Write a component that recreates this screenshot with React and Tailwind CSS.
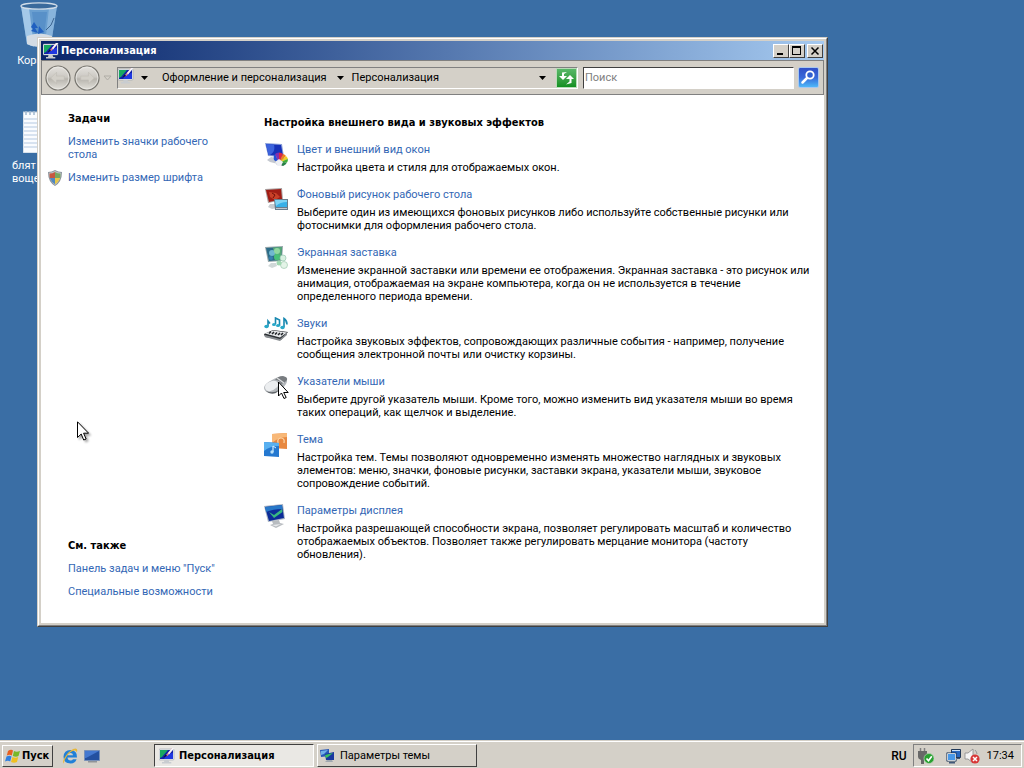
const SETTINGS = [
  {
    icon: ColorIcon,
    title: 'Цвет и внешний вид окон',
    lines: ['Настройка цвета и стиля для отображаемых окон.'],
  },
  {
    icon: WallpaperIcon,
    title: 'Фоновый рисунок рабочего стола',
    lines: [
      'Выберите один из имеющихся фоновых рисунков либо используйте собственные рисунки или',
      'фотоснимки для оформления рабочего стола.',
    ],
  },
  {
    icon: ScreensaverIcon,
    title: 'Экранная заставка',
    lines: [
      'Изменение экранной заставки или времени ее отображения. Экранная заставка - это рисунок или',
      'анимация, отображаемая на экране компьютера, когда он не используется в течение',
      'определенного периода времени.',
    ],
  },
  {
    icon: SoundsIcon,
    title: 'Звуки',
    lines: [
      'Настройка звуковых эффектов, сопровождающих различные события - например, получение',
      'сообщения электронной почты или очистку корзины.',
    ],
  },
  {
    icon: PointersIcon,
    title: 'Указатели мыши',
    lines: [
      'Выберите другой указатель мыши. Кроме того, можно изменить вид указателя мыши во время',
      'таких операций, как щелчок и выделение.',
    ],
  },
  {
    icon: ThemeIcon,
    title: 'Тема',
    lines: [
      'Настройка тем. Темы позволяют одновременно изменять множество наглядных и звуковых',
      'элементов: меню, значки, фоновые рисунки, заставки экрана, указатели мыши, звуковое',
      'сопровождение событий.',
    ],
  },
  {
    icon: DisplayIcon,
    title: 'Параметры дисплея',
    lines: [
      'Настройка разрешающей способности экрана, позволяет регулировать масштаб и количество',
      'отображаемых объектов. Позволяет также регулировать мерцание монитора (частоту',
      'обновления).',
    ],
  },
]

const raised =
  'border border-t-white border-l-white border-r-[#404040] border-b-[#404040] bg-[#d4d0c8]'
const sunken = 'border border-t-[#808080] border-l-[#808080] border-r-white border-b-white'
const link = 'text-[#3367b5] hover:underline'
const bold = "font-bold font-['DejaVu_Sans_Condensed','DejaVu_Sans',sans-serif]"

function PersonalizeIcon({ className = 'w-4 h-4' }) {
  return (
    <svg viewBox="0 0 16 16" className={className}>
      <rect x="0" y="1" width="15" height="11" rx="1" fill="#e8ecf0" stroke="#8a94a0" strokeWidth=".5" />
      <rect x="1" y="2" width="13" height="9" fill="#1020a8" />
      <path d="M1 2h8L3 9l-2 1z" fill="#18a860" />
      <path d="M8 6l6-1v6H5z" fill="#2038e0" />
      <path d="M4.500 9.500L7 6.500l1.500 1z" fill="#111" />
      <path d="M7 7L13 0l2 0-6.500 8z" fill="#d88090" />
      <path d="M9 5l4-5h2.500L10 6.500z" fill="#f4f4f8" />
      <path d="M5.500 12h4l.8 2h2v1.500H3V14h2z" fill="#c8ccd0" />
    </svg>
  )
}

function ColorIcon() {
  return (
    <svg viewBox="0 0 24 24" className="w-6 h-6">
      <path d="M1 0l17 1 2 13L4 13z" fill="#8a9fd8" />
      <path d="M2 1l15 1 2 11L4.500 12z" fill="#1632b8" />
      <path d="M2 1l8 .5c1 5 0 8-4 10.600L4.500 12z" fill="#3c63dc" />
      <path d="M7 14l5 1 2 6-8-2-3-2z" fill="#c4c8d0" />
      <path d="M10 16l5-4 8 4-4 7-6-1z" fill="#8890a0" />
      <path d="M15 20l-5-3q-1-4 1-6z" fill="#2050d8" />
      <path d="M15 20l-4-9q1.500-1.500 4-1.500z" fill="#8030b0" />
      <path d="M15 20V9.500q2.500 0 4 1.500z" fill="#d82848" />
      <path d="M15 20l4-9q2 .5 3 2z" fill="#f08020" />
      <path d="M15 20l7-7q1.500 1.500 2 3z" fill="#e8d028" />
      <path d="M15 20l9-4q0 2-1 3.500z" fill="#40b038" />
      <path d="M15 20l8-.5q-1 2-4 3.500z" fill="#288048" />
      <path d="M11 19l4-3 4 3-2 4h-3z" fill="#eef0f4" />
    </svg>
  )
}

function WallpaperIcon() {
  return (
    <svg viewBox="0 0 24 24" className="w-6 h-6">
      <path d="M1 1l17-1 1 12-15 3z" fill="#a8a0a0" />
      <path d="M2 2l15-1 1 10-13 3z" fill="#a01c14" />
      <path d="M5 4l7 1 4 4-5 3-5-3z" fill="#c84028" />
      <path d="M8 5l3 2-2 3" fill="none" stroke="#701008" />
      <path d="M6 16l5 0 2 4-5 1-4-2z" fill="#c8ccd0" />
      <path d="M10 11h14v11H11z" fill="#687c8c" />
      <path d="M11 12h12v7H12z" fill="#38b0e8" />
      <path d="M11 12h12v2q-7 0-11 4z" fill="#80d4f4" />
      <path d="M12 20h11v1H12z" fill="#c0c8d0" />
    </svg>
  )
}

function ScreensaverIcon() {
  return (
    <svg viewBox="0 0 24 24" className="w-6 h-6">
      <path d="M1 1l18-1-1 15-14 1z" fill="#98a8ac" />
      <path d="M2 2l16-1-1 13-12 1z" fill="#2c6c88" />
      <path d="M9 1.500l9-.5-1 13-6 .5z" fill="#58a878" />
      <circle cx="8" cy="7" r="3" fill="#70b8d0" />
      <circle cx="13" cy="5" r="3" fill="#90d8a0" />
      <circle cx="13" cy="11" r="3" fill="#48c078" />
      <circle cx="7" cy="12" r="2" fill="#3880b0" />
      <circle cx="19" cy="12" r="3" fill="#d8f0e0" stroke="#98c8b0" strokeWidth=".7" />
      <circle cx="20" cy="19" r="3.500" fill="#e4f4e8" stroke="#a0c8b0" strokeWidth=".7" />
      <circle cx="15" cy="17" r="2.500" fill="#a0d8b0" />
      <path d="M7 17l5 0 1 3-5 2-4-2z" fill="#d0d8d8" />
    </svg>
  )
}

function SoundsIcon() {
  return (
    <svg viewBox="0 0 24 24" className="w-6 h-6">
      <g fill="none" stroke="#1888b0" strokeWidth="1.600">
        <path d="M4 9.500V4l2 2.500" />
        <path d="M11.500 7V1l4 2v6" />
        <path d="M20 10V1.500q3 2 3 6" />
      </g>
      <g fill="#28a8c8">
        <ellipse cx="2.500" cy="9.500" rx="2.200" ry="1.700" />
        <ellipse cx="10" cy="7.500" rx="2" ry="1.600" />
        <ellipse cx="14" cy="8.500" rx="2" ry="1.600" />
        <ellipse cx="18.500" cy="10.500" rx="2.200" ry="1.700" />
      </g>
      <path d="M0 17l9-4 15 2-7 8L1 20z" fill="#2c3034" />
      <path d="M1 16.500l8-3 14 2-7 5z" fill="#e8eaec" />
      <path d="M7 14.500l-2 2M10 15l-2 2M13 15.500l-2 2M16 16l-2 2M19 16l-2 2" stroke="#202428" strokeWidth="1.600" />
      <path d="M1 18l15 4 7-6v2l-7 6-15-4z" fill="#888c90" />
    </svg>
  )
}

function Pointer({ className }) {
  return (
    <svg viewBox="0 0 12 20" className={className}>
      <path
        d="M.5 .8v15.700l3.700-3.500 2.500 6 2.400-1-2.500-5.800h5z"
        fill="#fff"
        stroke="#000"
        strokeWidth="1"
      />
    </svg>
  )
}

function PointersIcon() {
  return (
    <svg viewBox="0 0 24 24" className="w-6 h-6 overflow-visible">
      <path d="M0 13q0-4 8-8 8-5 12-3 5 2 2 7-4 7-13 9-8 1-9-5z" fill="#b4b8bc" />
      <path d="M1 12q0-4 7-6 4-1 6 2 1 3-2 5-4 4-8 3-3-1-3-4z" fill="#eceef0" />
      <path d="M11 5q3-4 8-4 5 1 4 4-2 3-6 4-1-4-6-4z" fill="#787c80" />
      <path d="M13 3l7 5" stroke="#d8dadc" strokeWidth="1.500" />
      <path d="M2 16q7 3 13-1l-3 3q-6 2-10-2z" fill="#606468" />
      <path d="M14.500 7v14l3-3 2.500 5.500 2.200-1-2.500-5h4.500z" fill="#fff" stroke="#000" />
    </svg>
  )
}

function ThemeIcon() {
  return (
    <svg viewBox="0 0 24 24" className="w-6 h-6">
      <path d="M8 1l15-1v16l-15-1z" fill="#e88840" />
      <path d="M8 1l15-1v4q-9 0-15 6z" fill="#f8b878" />
      <path d="M14 10q-1-5 3-5t3 5" fill="none" stroke="#fcd8a8" strokeWidth="1.200" />
      <path d="M0 9l15 1v14l-15-1z" fill="#2478d0" />
      <path d="M0 9l15 1v3Q6 13 0 18z" fill="#58b0f0" />
      <path d="M9 13v6" stroke="#d0ecff" strokeWidth="1.200" />
      <circle cx="8" cy="19" r="1.700" fill="#b8e0f8" />
      <path d="M9 13l3 2" stroke="#d0ecff" />
    </svg>
  )
}

function DisplayIcon() {
  return (
    <svg viewBox="0 0 24 24" className="w-6 h-6">
      <path d="M0 2l19-2 2 15-17 3z" fill="#a8b4c4" />
      <path d="M1 3l17-2 2 13-15 3z" fill="#0c2c98" />
      <path d="M1 3l17-2 .5 4Q9 5 2 8z" fill="#2878c8" />
      <path d="M5 8l5 3 8-6 .5 3L10 14z" fill="#38b880" />
      <path d="M8 17l7-1 1 3 4 1-8 4-6-3 3-1z" fill="#b8bcc0" />
      <path d="M8 21l9-1-5 2.500z" fill="#e8eaec" />
    </svg>
  )
}

function ShieldIcon() {
  return (
    <svg viewBox="0 0 14 16" className="w-3.5 h-4 shrink-0">
      <path d="M7 0q3 2 7 2 0 10-7 14Q0 12 0 2q4 0 7-2z" fill="#8c949c" />
      <path d="M7 1q2.500 1.500 6 1.800Q12.500 11 7 15 1.500 11 1 2.800 4.500 2.500 7 1z" fill="#c4c8cc" />
      <path d="M7 2V8H1.800Q1.500 6 1.500 3.500q3 0 5.500-1.500z" fill="#c85840" />
      <path d="M7 2V8h5.200Q12.500 6 12.500 3.500 9.500 3.500 7 2z" fill="#78a860" />
      <path d="M7 8v6.300Q3.500 12 1.800 8z" fill="#5088c0" />
      <path d="M7 8v6.300Q10.500 12 12.200 8z" fill="#e8c848" />
    </svg>
  )
}

function RecycleBin() {
  return (
    <svg viewBox="0 0 38 46" className="w-[38px] h-[46px]">
      <path d="M1 4l6 38q12 6 24 0l6-38z" fill="#6a9fd0" />
      <path d="M1 4l6 38q4 2 7 2.500L9 6z" fill="#a4c8e8" />
      <path d="M29 6l-4 37 6-1 6-38z" fill="#88b4dc" />
      <path d="M12 10l3 24h9l3-24z" fill="#5890c8" />
      <path d="M7 34q12-5 25 0l-1 8q-12 6-24 0z" fill="#d4dce4" />
      <path d="M14 20l4 6h-3l3 5-7-2 2-2-2-2zM19 24l5 6-6 2z" fill="#2060c0" />
      <ellipse cx="19" cy="4" rx="18" ry="3.200" fill="#3a6a9c" stroke="#d0dce8" strokeWidth="1.300" />
      <path d="M26 28q6-4 8-12" fill="none" stroke="#3c6490" />
    </svg>
  )
}

function NotepadFile() {
  return (
    <svg viewBox="0 0 32 42" className="w-8 h-[42px]">
      <path d="M0 1h32v41H0z" fill="#fafcff" stroke="#b8c8d8" />
      <path
        d="M1 8h30M1 12h30M1 16h30M1 20h30M1 24h30M1 28h30M1 32h30M1 36h30"
        stroke="#b4c8e0"
      />
      <path d="M3 0v4M7 0v4M11 0v4M15 0v4M19 0v4M23 0v4M27 0v4" stroke="#a0b8d0" strokeWidth="1.500" />
    </svg>
  )
}

function Caret({ className = '' }) {
  return (
    <svg viewBox="0 0 7 4" className={`w-[7px] h-1 shrink-0 ${className}`}>
      <path d="M0 0h7L3.500 4z" fill="currentColor" />
    </svg>
  )
}

function NavButton({ back }) {
  return (
    <button type="button" aria-label={back ? 'Назад' : 'Вперед'} className="w-[26px] h-[26px] rounded-full">
      <svg viewBox="0 0 27 27" className="w-[26px] h-[26px]">
        <defs>
          <linearGradient id="nav-face" x1="0" y1="0" x2="0" y2="1">
            <stop offset="0" stopColor="#e4e2de" />
            <stop offset=".46" stopColor="#ccc9c3" />
            <stop offset=".54" stopColor="#b8b5ae" />
            <stop offset="1" stopColor="#e4e2dc" />
          </linearGradient>
        </defs>
        <circle cx="13.500" cy="13.500" r="12.500" fill="url(#nav-face)" stroke="#77756f" strokeWidth="1.200" />
        <circle cx="13.500" cy="13.500" r="11.300" fill="none" stroke="#eceae6" strokeWidth=".8" />
        <path
          d={back ? 'M6 13.500l6-6v4h8v4h-8v4z' : 'M21 13.500l-6-6v4H7v4h8v4z'}
          fill="#d2cfc8"
          stroke="#c0bdb6"
          strokeWidth=".6"
        />
      </svg>
    </button>
  )
}

function TitleBar() {
  const btn = `${raised} w-4 h-3.5 flex items-center justify-center`
  return (
    <header className="h-[19px] flex items-center pl-0.5 pr-px bg-linear-to-r from-[#0a246a] to-[#a6caf0]">
      <PersonalizeIcon />
      <h1 className={`flex-1 pl-0.5 text-white ${bold}`}>Персонализация</h1>
      <button type="button" aria-label="Свернуть" className={btn}>
        <svg viewBox="0 0 12 10" className="w-3 h-2.5"><path d="M2 7h6v2H2z" /></svg>
      </button>
      <button type="button" aria-label="Развернуть" className={btn}>
        <svg viewBox="0 0 12 10" className="w-3 h-2.5"><path d="M1 0h9v9H1zM2 2v6h7V2z" fillRule="evenodd" /></svg>
      </button>
      <button type="button" aria-label="Закрыть" className={`${btn} ml-0.5`}>
        <svg viewBox="0 0 12 10" className="w-3 h-2.5">
          <path d="M2.500 1.500l7 7M9.500 1.500l-7 7" stroke="#000" strokeWidth="1.500" />
        </svg>
      </button>
    </header>
  )
}

function Toolbar() {
  return (
    <div className="h-[35px] flex items-center pl-[3px] pr-1 border border-[#808080]">
      <div className="flex items-center gap-[3px]">
        <NavButton back />
        <NavButton />
        <svg viewBox="0 0 9 6" className="w-[9px] h-1.5">
          <path d="M1 1h7L4.500 5z" fill="#d4d0c8" stroke="#b0ada6" />
        </svg>
      </div>
      <nav className={`${sunken} ml-[5px] flex-1 h-[22px] flex items-center`}>
        <PersonalizeIcon className="w-4 h-4 mb-1" />
        <Caret className="ml-[7px]" />
        <a href="#appearance" className="ml-3.5 whitespace-nowrap">Оформление и персонализация</a>
        <Caret className="ml-2.5" />
        <a href="#personalization" className="ml-2 whitespace-nowrap">Персонализация</a>
        <Caret className="ml-auto mr-2.5" />
        <button type="button" aria-label="Обновить" className="w-[21px] h-5 bg-linear-to-b from-[#58b868] to-[#109020] border border-[#b8dcb8]">
          <svg viewBox="0 0 19 18" className="w-[19px] h-[18px]">
            <path d="M2 7l4 4 4-4H7V5l3-2-5 .500V7z" fill="#fff" />
            <path d="M9 10l4-4 4 4h-2.500v4L9 15.500l3.500-3V10z" fill="#fff" />
          </svg>
        </button>
      </nav>
      <input
        type="text"
        aria-label="Поиск"
        placeholder="Поиск"
        className="ml-[5px] w-[211px] h-[22px] px-px bg-white border border-t-[#404040] border-l-[#404040] border-r-white border-b-white outline-none placeholder:text-[#808080]"
      />
      <button type="button" aria-label="Найти" className="ml-1 w-[21px] h-[21px] rounded-xs border border-[#a8c8f0] bg-linear-to-b from-[#3050c8] via-[#3868d8] to-[#50b8f8]">
        <svg viewBox="0 0 19 19" className="w-[19px] h-[19px]">
          <circle cx="11" cy="7" r="3.700" fill="#3060d0" stroke="#fff" strokeWidth="1.800" />
          <path d="M8 10l-4.500 4.500" stroke="#fff" strokeWidth="2.500" strokeLinecap="round" />
        </svg>
      </button>
    </div>
  )
}

function Sidebar() {
  return (
    <aside className="w-[223px] shrink-0 flex flex-col justify-between pt-[17px] pb-[25px] pl-[27px] pr-6">
      <section className="flex flex-col gap-2.5">
        <h2 className={bold}>Задачи</h2>
        <a href="#desktop-icons" className={link}>
          Изменить значки рабочего
          <br />
          стола
        </a>
        <div className="-ml-5 h-[13px] flex items-center gap-1.5">
          <ShieldIcon />
          <a href="#font-size" className={`${link} whitespace-nowrap`}>Изменить размер шрифта</a>
        </div>
      </section>
      <section className="flex flex-col gap-2.5 whitespace-nowrap">
        <h2 className={bold}>См. также</h2>
        <a href="#taskbar" className={link}>Панель задач и меню "Пуск"</a>
        <a href="#accessibility" className={link}>Специальные возможности</a>
      </section>
    </aside>
  )
}

function Settings() {
  return (
    <main className="flex-1 pt-[21px] pb-14 flex flex-col gap-3.5">
      <h2 className={bold}>Настройка внешнего вида и звуковых эффектов</h2>
      {SETTINGS.map(({ icon: Icon, title, lines }) => (
        <article key={title} className="flex gap-[9px]">
          <div className="w-6 h-6 shrink-0"><Icon /></div>
          <div className="whitespace-nowrap">
            <h3 className="mb-[5px]"><a href="#setting" className={link}>{title}</a></h3>
            {lines.map(line => <p key={line}>{line}</p>)}
          </div>
        </article>
      ))}
    </main>
  )
}

function PersonalizationWindow() {
  return (
    <div className="relative flex-1 flex flex-col mt-[37px] ml-[37px] mr-[196px] mb-[113px] border border-t-[#d4d0c8] border-l-[#d4d0c8] border-r-[#404040] border-b-[#404040]">
      <div className="flex-1 flex flex-col p-0.5 border border-t-white border-l-white border-r-[#808080] border-b-[#808080] bg-[#d4d0c8]">
        <TitleBar />
        <Toolbar />
        <div className="flex-1 flex bg-white">
          <Sidebar />
          <Settings />
        </div>
      </div>
    </div>
  )
}

function IeIcon() {
  return (
    <svg viewBox="0 0 16 16" className="w-4 h-4">
      <path d="M15 9.500H5.500q.3 3 3 3 1.800 0 2.500-1.300h3.600Q13 15.500 8.500 15.500 1.500 15 1.500 8.700 2 2 8.300 2q7 0 6.700 7.500zM5.600 7.300h5.500Q10.800 5 8.400 5 6 5 5.600 7.300z" fill="#2080d8" />
      <path d="M2 15.500Q-.5 14 4 7.500 9 1 13.500.6q3 .2 1 4Q14.500 2 12 2.600 8 3.700 4.500 8.700 1.500 13.300 2 15.500z" fill="#e8b838" />
    </svg>
  )
}

function ShowDesktopIcon() {
  return (
    <svg viewBox="0 0 16 14" className="w-4 h-3.5">
      <path d="M.5 1.500h15v10H.5z" fill="#2450a0" stroke="#7890b8" />
      <path d="M1 2h14L2 9H1z" fill="#4478d0" />
      <path d="M4 12h9v1.500H4z" fill="#909498" />
    </svg>
  )
}

function ThemeSettingsIcon() {
  return (
    <svg viewBox="0 0 16 16" className="w-4 h-4">
      <path d="M0 2l9-1v7l-8 1z" fill="#2858b8" />
      <path d="M1 3l7-1-4 4-3 1z" fill="#70b0e8" />
      <path d="M5 6l9-2v8l-8 0z" fill="#1838a0" />
      <path d="M5 7l8-2-5 4-2 1z" fill="#38c060" />
      <path d="M7 12l5 0 1 2H5z" fill="#a0a8b0" />
    </svg>
  )
}

function Tray() {
  return (
    <div className={`${sunken} h-[23px] flex items-center pl-1 pr-[7px]`}>
      <svg viewBox="0 0 16 16" className="w-4 h-4">
        <path d="M2.500 0v4M6.500 0v4" stroke="#808080" strokeWidth="1.500" />
        <path d="M0 3h9v6q-1 3-3 3v4H3v-4Q0 11 0 9z" fill="#686868" />
        <circle cx="11" cy="10.500" r="5" fill="#28a030" stroke="#b0d8b0" strokeWidth=".7" />
        <path d="M8.500 10.500l2 2.200 3.300-4.500" fill="none" stroke="#fff" strokeWidth="1.700" />
      </svg>
      <svg viewBox="0 0 16 16" className="w-4 h-4 ml-3">
        <path d="M5.500 1.500h9v8h-9z" fill="#2868c0" stroke="#203858" />
        <path d="M6 2h8v1H6z" fill="#c8e0f8" />
        <path d="M1.500 5.500h8v7h-8z" fill="#4898e8" stroke="#fff" />
        <path d="M.8 4.800h9.400v8.400H.8z" fill="none" stroke="#203858" strokeWidth=".8" />
        <path d="M3 14h6v1.500H3zM11 10h3v1h-3z" fill="#405878" />
      </svg>
      <svg viewBox="0 0 16 16" className="w-4 h-4 ml-0.5">
        <path d="M1 5h3l5-4v14l-5-4H1z" fill="#f4f4f4" stroke="#888" strokeWidth=".8" />
        <path d="M11 2q2 2 2 4" fill="none" stroke="#999" />
        <circle cx="11" cy="11" r="4.600" fill="#d83838" />
        <path d="M9 9l4 4M13 9l-4 4" stroke="#fff" strokeWidth="1.500" />
      </svg>
      <time className="ml-[7px]">17:34</time>
    </div>
  )
}

function Taskbar() {
  return (
    <footer className="h-7 flex items-center border-t border-[#d4d0c8] shadow-[inset_0_1px_0_#fff] bg-[#d4d0c8] pt-0.5 pl-0.5 pr-0.5">
      <button type="button" className={`${raised} w-[51px] h-[22px] flex items-center gap-px pl-0.5 ${bold}`}>
        <svg viewBox="0 0 16 16" className="w-4 h-4 shrink-0">
          <path d="M3 3q3-2 5-.5L6.800 7.500Q4.500 6 1.800 7.500z" fill="#e86020" />
          <path d="M9 3q2.500 1.500 6 0l-1.500 5Q11 9.500 7.800 8z" fill="#78b828" />
          <path d="M1.500 8.500Q4.500 7 6.500 8.500l-1.300 5Q3 12 0 13.500z" fill="#3080e0" />
          <path d="M7.500 9q3 1.500 5.700 0L12 14q-3 1.500-6 0z" fill="#f0c020" />
        </svg>
        Пуск
      </button>
      <div className="flex items-center gap-1.5 ml-[9px] w-[92px]">
        <button type="button" aria-label="Internet Explorer"><IeIcon /></button>
        <button type="button" aria-label="Свернуть все окна"><ShowDesktopIcon /></button>
      </div>
      <div className="flex-1 flex gap-[3px]">
        <button type="button" className={`w-40 h-[23px] flex items-center gap-1 pl-1 border border-t-[#404040] border-l-[#404040] border-r-white border-b-white bg-[#eae8e4] ${bold}`}>
          <PersonalizeIcon />
          Персонализация
        </button>
        <button type="button" className={`${raised} w-40 h-[23px] flex items-center gap-1 pl-0.5`}>
          <ThemeSettingsIcon />
          Параметры темы
        </button>
      </div>
      <span className="mr-1.5 text-xs font-medium">RU</span>
      <Tray />
    </footer>
  )
}

export default function App() {
  return (
    <div className="min-h-screen flex flex-col bg-[#3a6ea5] text-black text-[11px] leading-[13px] font-['Roboto','Noto_Sans',sans-serif]">
      <div className="relative flex-1 flex flex-col">
        <div className="absolute left-0 top-0.5 w-[78px] flex flex-col items-center gap-1.5 text-white">
          <RecycleBin />
          <span>Корзина</span>
        </div>
        <div className="absolute left-3 top-[111px] flex flex-col gap-1.5 text-white">
          <div className="pl-[11px]"><NotepadFile /></div>
          <span>
            блят
            <br />
            воще
          </span>
        </div>
        <PersonalizationWindow />
        <Pointer className="absolute left-[77px] top-[421px] w-3 h-5 drop-shadow-[2px_2px_1px_rgba(0,0,0,0.35)]" />
      </div>
      <Taskbar />
    </div>
  )
}
